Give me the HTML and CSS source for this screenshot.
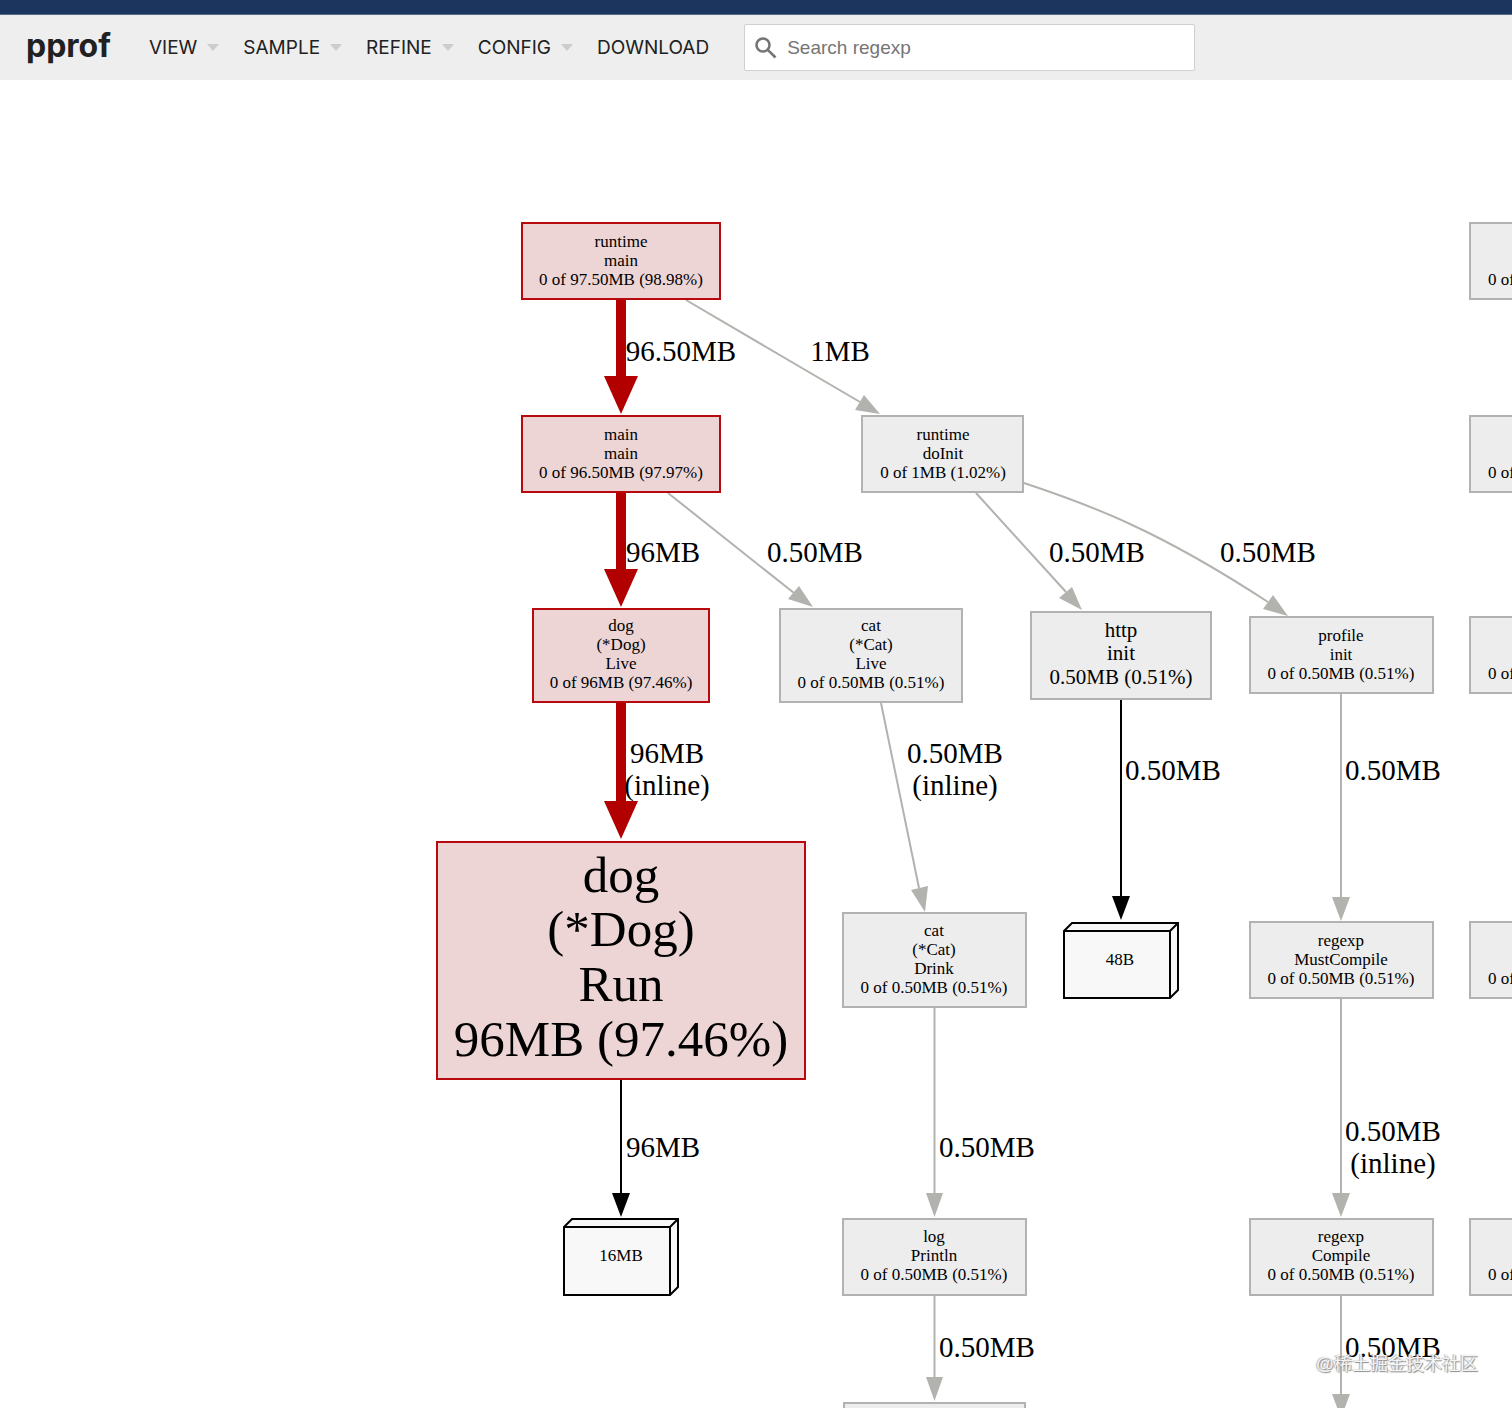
FILE: index.html
```html
<!DOCTYPE html>
<html lang="en">
<head>
    <meta charset="UTF-8">
    <meta name="viewport" content="width=device-width, initial-scale=1.0">
    <title>pprof</title>
    <link rel="stylesheet" href="styles.css">
</head>
<body>
<div class="topbar"></div>
<header class="header">
    <h1 class="title">pprof</h1>
    <nav class="menu">
        <button type="button" class="menu-item">VIEW<i class="downArrow"></i></button>
        <button type="button" class="menu-item">SAMPLE<i class="downArrow"></i></button>
        <button type="button" class="menu-item">REFINE<i class="downArrow"></i></button>
        <button type="button" class="menu-item">CONFIG<i class="downArrow"></i></button>
        <a class="menu-item" href="#">DOWNLOAD</a>
    </nav>
    <label class="search">
        <svg class="search-icon" viewBox="0 0 22 22" aria-hidden="true">
            <circle cx="8" cy="8" r="6.5"/>
            <path d="M12.8 12.8L20.5 20.5"/>
        </svg>
        <input type="text" placeholder="Search regexp" aria-label="Search regexp">
    </label>
</header>
<main class="graph">
    <svg xmlns="http://www.w3.org/2000/svg">
        <g transform="translate(0 -80)">
            <!-- edges -->
            <g class="edge hot">
                <path d="M621 300V377"/>
                <polygon points="604,376 638,376 621,414"/>
                <path d="M621 493V570"/>
                <polygon points="604,569 638,569 621,607"/>
                <path d="M621 703V802"/>
                <polygon points="604,801 638,801 621,839"/>
            </g>
            <g class="edge cold">
                <path d="M686 300L860 402"/>
                <polygon points="864,395 855,410 880,414"/>
                <path d="M668 493L794 593"/>
                <polygon points="799,586 788,599 813,607"/>
                <path d="M976 493L1066 592"/>
                <polygon points="1072,587 1059,598 1082,610"/>
                <path d="M1024 483C1060 495 1096 508 1130 524C1178 546 1225 574 1268 602"/>
                <polygon points="1273,595 1263,609 1288,616"/>
                <path d="M881 703L919 888"/>
                <polygon points="928,886 911,890 925,912"/>
                <path d="M1341 694V897"/>
                <polygon points="1332,897 1350,897 1341,921"/>
                <path d="M1341 999V1193"/>
                <polygon points="1332,1193 1350,1193 1341,1217"/>
                <path d="M1341 1296V1394"/>
                <polygon points="1332,1394 1350,1394 1341,1418"/>
                <path d="M934.5 1008V1193"/>
                <polygon points="926,1193 943,1193 934.5,1217"/>
                <path d="M934.5 1296V1377"/>
                <polygon points="926,1377 943,1377 934.5,1401"/>
            </g>
            <g class="edge tag">
                <path d="M1121 700V897"/>
                <polygon points="1112,896 1130,896 1121,920"/>
                <path d="M621 1080V1193"/>
                <polygon points="612,1193 630,1193 621,1217"/>
            </g>

            <!-- edge labels -->
            <g class="weight">
                <text x="681" y="361">96.50MB</text>
                <text x="840" y="361">1MB</text>
                <text x="663" y="562">96MB</text>
                <text x="815" y="562">0.50MB</text>
                <text x="1097" y="562">0.50MB</text>
                <text x="1268" y="562">0.50MB</text>
                <text x="667" y="763">96MB</text>
                <text x="667" y="795">(inline)</text>
                <text x="955" y="763">0.50MB</text>
                <text x="955" y="795">(inline)</text>
                <text x="1173" y="780">0.50MB</text>
                <text x="1393" y="780">0.50MB</text>
                <text x="663" y="1157">96MB</text>
                <text x="987" y="1157">0.50MB</text>
                <text x="1393" y="1141">0.50MB</text>
                <text x="1393" y="1173">(inline)</text>
                <text x="987" y="1357">0.50MB</text>
                <text x="1393" y="1357">0.50MB</text>
            </g>

            <!-- nodes -->
            <g class="node hot">
                <rect x="522" y="223" width="198" height="76"/>
                <text x="621" y="247">runtime</text>
                <text x="621" y="266">main</text>
                <text x="621" y="285">0 of 97.50MB (98.98%)</text>
            </g>
            <g class="node hot">
                <rect x="522" y="416" width="198" height="76"/>
                <text x="621" y="440">main</text>
                <text x="621" y="459">main</text>
                <text x="621" y="478">0 of 96.50MB (97.97%)</text>
            </g>
            <g class="node">
                <rect x="862" y="416" width="161" height="76"/>
                <text x="943" y="440">runtime</text>
                <text x="943" y="459">doInit</text>
                <text x="943" y="478">0 of 1MB (1.02%)</text>
            </g>
            <g class="node hot">
                <rect x="533" y="609" width="176" height="93"/>
                <text x="621" y="631">dog</text>
                <text x="621" y="650">(*Dog)</text>
                <text x="621" y="669">Live</text>
                <text x="621" y="688">0 of 96MB (97.46%)</text>
            </g>
            <g class="node">
                <rect x="780" y="609" width="182" height="93"/>
                <text x="871" y="631">cat</text>
                <text x="871" y="650">(*Cat)</text>
                <text x="871" y="669">Live</text>
                <text x="871" y="688">0 of 0.50MB (0.51%)</text>
            </g>
            <g class="node medium">
                <rect x="1031" y="612" width="180" height="87"/>
                <text x="1121" y="637">http</text>
                <text x="1121" y="660">init</text>
                <text x="1121" y="684">0.50MB (0.51%)</text>
            </g>
            <g class="node">
                <rect x="1250" y="617" width="183" height="76"/>
                <text x="1341" y="641">profile</text>
                <text x="1341" y="660">init</text>
                <text x="1341" y="679">0 of 0.50MB (0.51%)</text>
            </g>
            <g class="node hot large">
                <rect x="437" y="842" width="368" height="237"/>
                <text x="621" y="892">dog</text>
                <text x="621" y="946">(*Dog)</text>
                <text x="621" y="1001">Run</text>
                <text x="621" y="1056">96MB (97.46%)</text>
            </g>
            <g class="node">
                <rect x="843" y="913" width="183" height="94"/>
                <text x="934" y="936">cat</text>
                <text x="934" y="955">(*Cat)</text>
                <text x="934" y="974">Drink</text>
                <text x="934" y="993">0 of 0.50MB (0.51%)</text>
            </g>
            <g class="node">
                <rect x="1250" y="922" width="183" height="76"/>
                <text x="1341" y="946">regexp</text>
                <text x="1341" y="965">MustCompile</text>
                <text x="1341" y="984">0 of 0.50MB (0.51%)</text>
            </g>
            <g class="node">
                <rect x="843" y="1219" width="183" height="76"/>
                <text x="934" y="1242">log</text>
                <text x="934" y="1261">Println</text>
                <text x="934" y="1280">0 of 0.50MB (0.51%)</text>
            </g>
            <g class="node">
                <rect x="1250" y="1219" width="183" height="76"/>
                <text x="1341" y="1242">regexp</text>
                <text x="1341" y="1261">Compile</text>
                <text x="1341" y="1280">0 of 0.50MB (0.51%)</text>
            </g>
            <g class="node">
                <rect x="844" y="1403" width="181" height="76"/>
            </g>
            <g class="node partial">
                <rect x="1470" y="223" width="183" height="76"/>
                <text x="1488" y="285">0 of</text>
                <rect x="1470" y="416" width="183" height="76"/>
                <text x="1488" y="478">0 of</text>
                <rect x="1470" y="617" width="183" height="76"/>
                <text x="1488" y="679">0 of</text>
                <rect x="1470" y="922" width="183" height="76"/>
                <text x="1488" y="984">0 of</text>
                <rect x="1470" y="1219" width="183" height="76"/>
                <text x="1488" y="1280">0 of</text>
            </g>

            <!-- allocation size tags -->
            <g class="node box3d">
                <path d="M1064 931L1072 923H1178V990L1170 998H1064Z"/>
                <path d="M1064 931H1170V998M1170 931L1178 923"/>
                <text x="1120" y="965">48B</text>
            </g>
            <g class="node box3d">
                <path d="M564 1227L572 1219H678V1287L670 1295H564Z"/>
                <path d="M564 1227H670V1295M670 1227L678 1219"/>
                <text x="621" y="1261">16MB</text>
            </g>
        </g>
    </svg>
    <span class="watermark">@稀土掘金技术社区</span>
</main>
</body>
</html>
```
FILE: styles.css
```css
* {
    box-sizing: border-box;
}
body {
    display: flex;
    flex-direction: column;
    height: 100vh;
    margin: 0;
    background-color: #fff;
    color: #212121;
    font-family: Inter, Roboto, sans-serif;
    overflow: hidden;
}
.topbar {
    flex: none;
    height: 15px;
    background-color: #1c355e;
    border-bottom: 1px solid #5a6c8c;
}
.header {
    display: flex;
    flex: none;
    align-items: center;
    height: 65px;
    padding: 0 26px;
    background-color: #eee;
}
.title {
    margin: 0 38px 4px 0;
    font-size: 32px;
    font-weight: 700;
    line-height: 40px;
}
.menu {
    display: flex;
    gap: 24px;
    margin-right: 35px;
}
.menu-item {
    display: flex;
    align-items: center;
    gap: 10px;
    padding: 0;
    border: 0;
    background: none;
    color: #212121;
    font-family: inherit;
    font-size: 19px;
    line-height: 24px;
    text-decoration: none;
    cursor: pointer;
}
.downArrow {
    border-top: 7px solid #ccc;
    border-left: 6px solid transparent;
    border-right: 6px solid transparent;
}
.search {
    display: flex;
    flex: 0 1 451px;
    align-items: center;
    gap: 10px;
    height: 47px;
    padding: 0 10px;
    border: 1px solid #d0d0d0;
    border-radius: 2px;
    background-color: #fff;
}
.search-icon {
    flex: none;
    width: 22px;
    height: 22px;
    fill: none;
    stroke: #757575;
    stroke-width: 2.6;
}
.search input {
    flex: 1;
    min-width: 0;
    padding: 0;
    border: 0;
    outline: 0;
    background: none;
    font-family: "Liberation Sans", Arial, sans-serif;
    font-size: 19px;
}
.search input::placeholder {
    color: #757575;
}
.graph {
    position: relative;
    flex: 1;
    min-height: 0;
    overflow: hidden;
}
.graph svg {
    display: block;
    width: 100%;
    height: 100%;
    font-family: "Liberation Serif", "Times New Roman", serif;
    text-anchor: middle;
}
.edge path {
    fill: none;
    stroke-width: 2;
}
.edge.hot path {
    stroke: #b20000;
    stroke-width: 10;
}
.edge.hot polygon {
    fill: #b20000;
}
.edge.cold path {
    stroke: #b2b2ae;
}
.edge.cold polygon {
    fill: #b2b2ae;
}
.edge.tag path {
    stroke: #000;
}
.weight {
    font-size: 29px;
}
.node {
    font-size: 17px;
}
.node rect {
    fill: #ededed;
    stroke: #b2b2b0;
    stroke-width: 2;
}
.node.hot rect {
    fill: #edd5d5;
    stroke: #b80a0e;
}
.node.medium {
    font-size: 21px;
}
.node.large {
    font-size: 51px;
}
.node.partial {
    text-anchor: start;
}
.box3d path {
    fill: #f8f8f8;
    stroke: #000;
    stroke-width: 2;
}
.watermark {
    position: absolute;
    right: 34px;
    bottom: 32px;
    color: #f4f4f4;
    font-family: "Liberation Sans", "Noto Sans CJK SC", sans-serif;
    font-size: 18px;
    line-height: 24px;
    text-shadow: 1px 1px 1px #888, -1px 0 1px #aaa;
}
```
